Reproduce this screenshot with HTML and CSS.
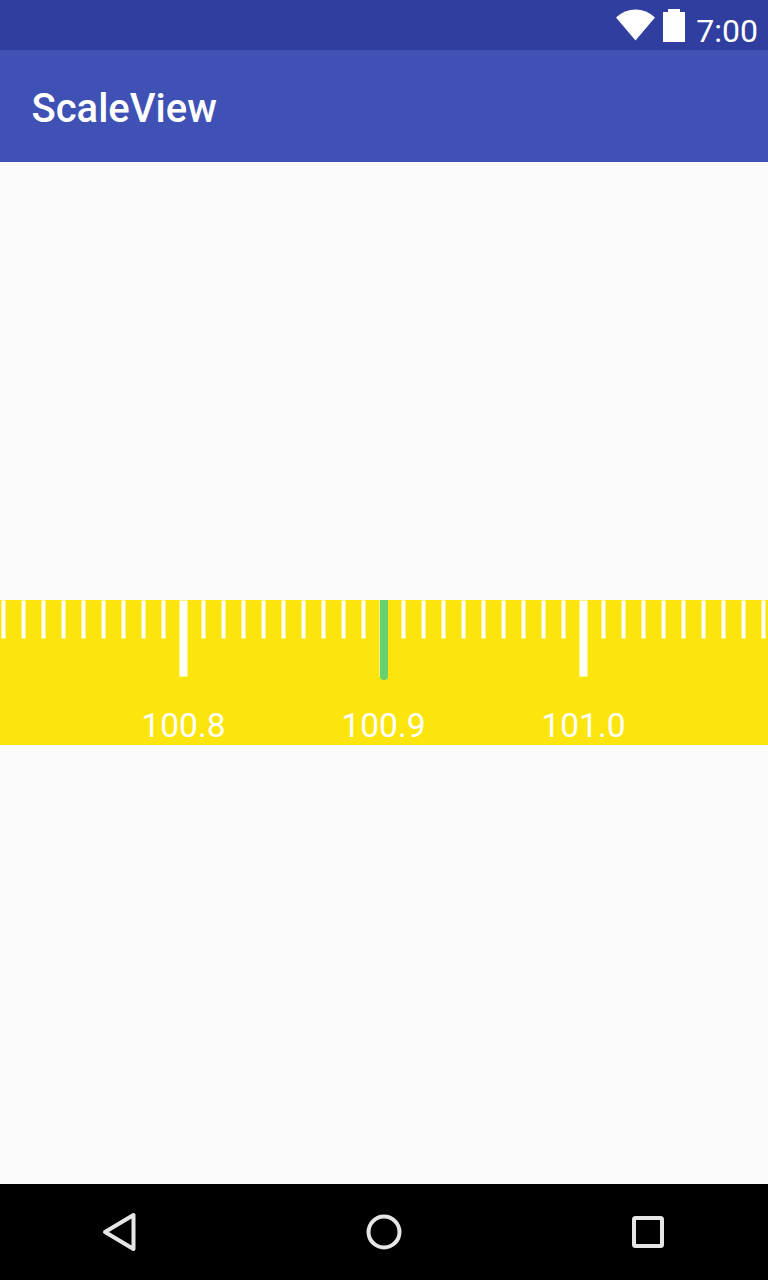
FILE: index.html
```html
<!DOCTYPE html>
<html lang="en">

<head>
    <meta charset="UTF-8">
    <meta name="viewport" content="width=device-width,user-scalable=no">
    <title>ScaleView</title>
    <link rel="stylesheet" href="styles.css">
</head>

<body>
    <div class="status-bar">
        <svg class="wifi" width="40" height="32" viewBox="0 0 40 32">
            <path d="M19.500 31.500 L0 8.500 Q8.500 0.500 19.500 0.500 Q30.500 0.500 39 8.500 Z" fill="#fff" />
        </svg>
        <svg class="battery" width="22" height="33" viewBox="0 0 22 33">
            <path d="M5 0 H17 V3 H22 V33 H0 V3 H5 Z" fill="#fff" />
        </svg>
        <span class="clock">7:00</span>
    </div>

    <div class="app-bar">
        <h1 class="app-title">ScaleView</h1>
    </div>

    <main class="content">
        <div class="scale">
            <div class="ticks">
                <div class="cell"><i class="tick"></i></div>
                <div class="cell"><i class="tick"></i></div>
                <div class="cell"><i class="tick"></i></div>
                <div class="cell"><i class="tick"></i></div>
                <div class="cell"><i class="tick"></i></div>
                <div class="cell"><i class="tick"></i></div>
                <div class="cell"><i class="tick"></i></div>
                <div class="cell"><i class="tick"></i></div>
                <div class="cell"><i class="tick"></i></div>
                <div class="cell"><i class="tick major"></i></div>
                <div class="cell"><i class="tick"></i></div>
                <div class="cell"><i class="tick"></i></div>
                <div class="cell"><i class="tick"></i></div>
                <div class="cell"><i class="tick"></i></div>
                <div class="cell"><i class="tick"></i></div>
                <div class="cell"><i class="tick"></i></div>
                <div class="cell"><i class="tick"></i></div>
                <div class="cell"><i class="tick"></i></div>
                <div class="cell"><i class="tick"></i></div>
                <div class="cell"><i class="tick major"></i></div>
                <div class="cell"><i class="tick"></i></div>
                <div class="cell"><i class="tick"></i></div>
                <div class="cell"><i class="tick"></i></div>
                <div class="cell"><i class="tick"></i></div>
                <div class="cell"><i class="tick"></i></div>
                <div class="cell"><i class="tick"></i></div>
                <div class="cell"><i class="tick"></i></div>
                <div class="cell"><i class="tick"></i></div>
                <div class="cell"><i class="tick"></i></div>
                <div class="cell"><i class="tick major"></i></div>
                <div class="cell"><i class="tick"></i></div>
                <div class="cell"><i class="tick"></i></div>
                <div class="cell"><i class="tick"></i></div>
                <div class="cell"><i class="tick"></i></div>
                <div class="cell"><i class="tick"></i></div>
                <div class="cell"><i class="tick"></i></div>
                <div class="cell"><i class="tick"></i></div>
                <div class="cell"><i class="tick"></i></div>
                <div class="cell"><i class="tick"></i></div>
            </div>
            <i class="pointer"></i>
            <div class="labels">
                <span class="label">100.8</span>
                <span class="label">100.9</span>
                <span class="label">101.0</span>
            </div>
        </div>
    </main>

    <div class="nav-bar">
        <svg width="40" height="44" viewBox="0 0 40 44">
            <path d="M33.500 5 V39 L5 22 Z" fill="none" stroke="#e6e6e6" stroke-width="4" stroke-linejoin="round" />
        </svg>
        <svg width="40" height="44" viewBox="0 0 40 44">
            <circle cx="20" cy="22" r="15.500" fill="none" stroke="#e6e6e6" stroke-width="4" />
        </svg>
        <svg width="40" height="44" viewBox="0 0 40 44">
            <rect x="6" y="8" width="28" height="28" rx="1.500" fill="none" stroke="#e6e6e6" stroke-width="4" />
        </svg>
    </div>
</body>

</html>
```

FILE: styles.css
```css
* {
    margin: 0;
    padding: 0;
    box-sizing: border-box;
}
html,
body {
    height: 100%;
}
body {
    display: flex;
    flex-direction: column;
    overflow: hidden;
    background: #fafafa;
    font-family: Roboto, sans-serif;
}
.status-bar {
    display: flex;
    align-items: flex-start;
    flex: none;
    height: 50px;
    padding: 9px 10px 0 0;
    background: #303f9f;
    justify-content: flex-end;
}
.wifi {
    margin-right: 7px;
}
.battery {
    margin-right: 11px;
}
.clock {
    margin-top: 3px;
    color: #fff;
    font-size: 32px;
    line-height: 38px;
}
.app-bar {
    display: flex;
    align-items: center;
    flex: none;
    height: 112px;
    padding: 4px 0 0 31.500px;
    background: #3f51b5;
}
.app-title {
    color: #fff;
    font-size: 40px;
    font-weight: 500;
}
.content {
    display: flex;
    flex: 1;
    flex-direction: column;
    padding-top: 438px;
}
.scale {
    position: relative;
    height: 145px;
    overflow: hidden;
    background: #fbe50c;
}
/* half pixel shift so the tick edges come out soft */
.ticks {
    display: flex;
    height: 96px;
    margin-left: -6px;
    transform: translate(-0.5px, 0.5px);
}
.cell {
    display: flex;
    flex: none;
    justify-content: center;
    width: 20px;
}
.tick {
    display: block;
    width: 4px;
    height: 38px;
    background: #fff;
}
.tick.major {
    width: 8px;
    height: 76px;
}
.pointer {
    position: absolute;
    top: 0;
    left: 380px;
    width: 8px;
    height: 80px;
    border-radius: 0 0 4px 4px;
    background: #66d16e;
}
.labels {
    display: flex;
    padding-left: 83.500px;
}
.label {
    width: 200px;
    color: #fff;
    font-size: 33.600px;
    line-height: 60px;
    text-align: center;
}
.nav-bar {
    display: flex;
    align-items: center;
    flex: none;
    justify-content: space-between;
    height: 96px;
    padding: 0 100px;
    background: #000;
}
```
